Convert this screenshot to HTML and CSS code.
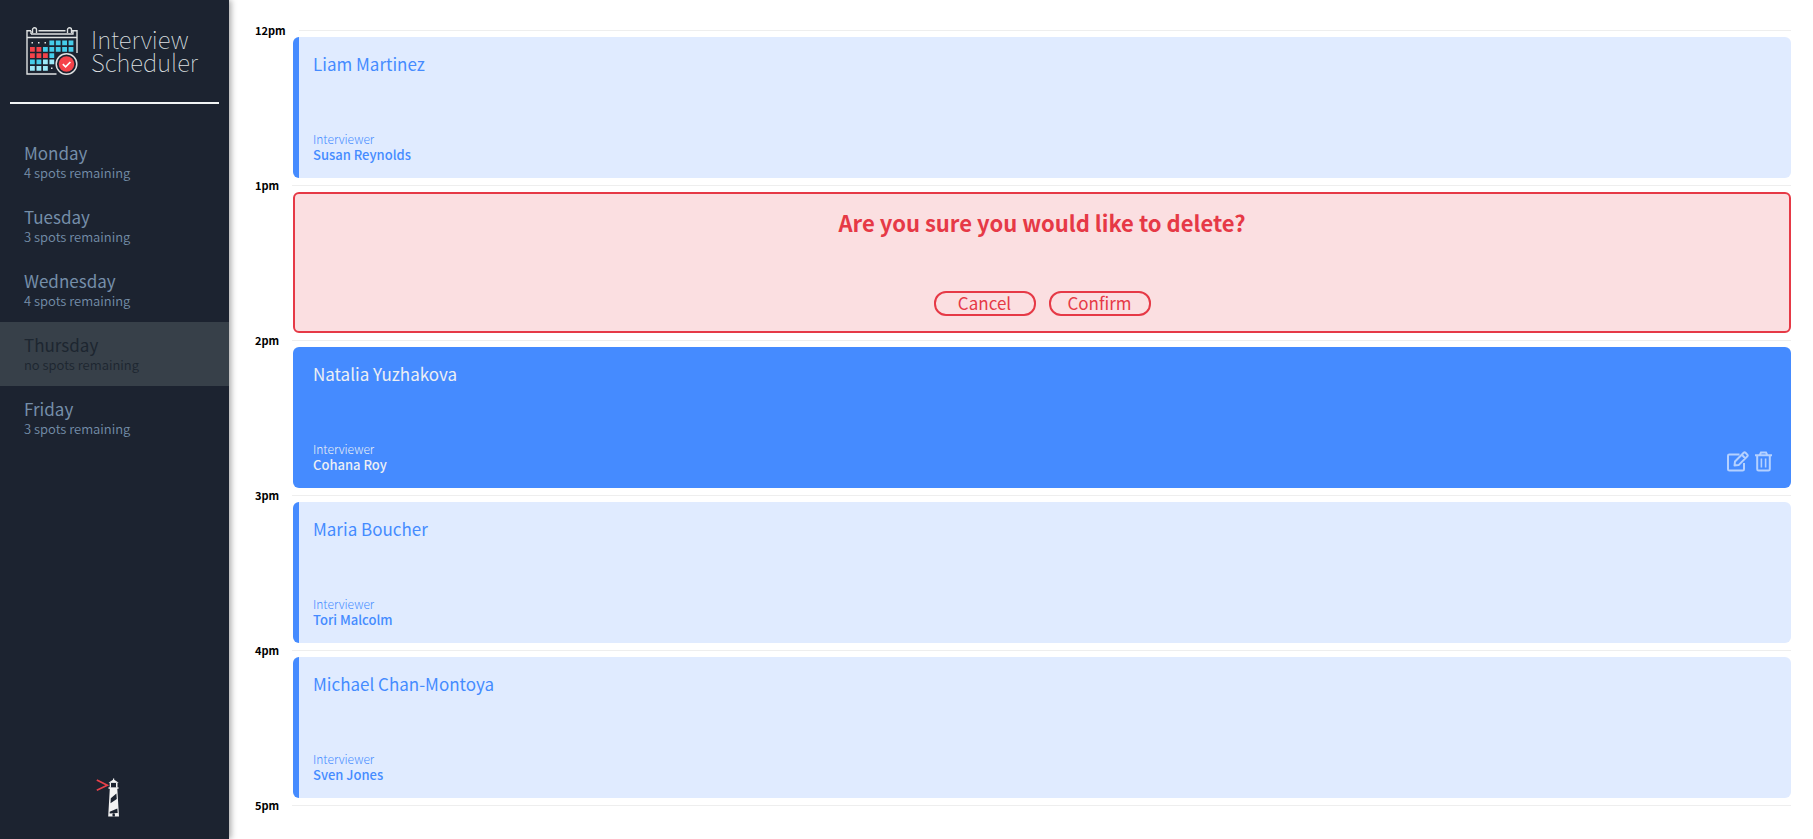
FILE: index.html
```html
<!DOCTYPE html>
<html lang="en">
<head>
<meta charset="utf-8">
<title>Interview Scheduler</title>
<link rel="stylesheet" href="styles.css">
</head>
<body>
<div class="layout">
  <aside class="sidebar">
    <div class="logo">
      <svg class="logo-icon" viewBox="0 0 52 49" aria-hidden="true">
        <g fill="none" stroke="#dfe2e2" stroke-width="1.4">
          <path d="M51 26V3.800H46M5 3.800H1V47H30.500M12.500 3.800H39.500M1 10.500H51M5 7H47V4M5 7V4"/>
          <path d="M6.500 6V2.800a2 2 0 0 1 4 0V6M41.500 6V2.800a2 2 0 0 1 4 0V6"/>
        </g>
        <g fill="#e3e6e6"><path d="M5.500 15h1.500v1.500H5.500zM12 15h1.500v1.500H12zM18.500 15H20v1.500h-1.500zM25 40.500h1.500V42H25z"/></g>
        <g fill="#45cdea"><path d="M23.400 13.500h4.800v4.700h-4.800zM29.800 13.500h4.800v4.700h-4.800zM36.200 13.500H41v4.700h-4.800zM42.600 13.500h4.800v4.700h-4.800zM17 20h4.800v4.700H17zM23.400 20h4.800v4.700h-4.800zM29.800 20h4.800v4.700h-4.800zM36.200 20H41v4.700h-4.800zM42.600 20h4.800v4.700h-4.800zM23.400 26.300h4.800V31h-4.800zM4 32.500h4.800v4.700H4zM10.500 32.500h4.800v4.700h-4.800z"/></g>
        <g fill="#9ce9f8"><path d="M17 32.500h4.800v4.700H17zM23.400 32.500h4.800v4.700h-4.800zM4 39h4.800v4.700H4zM10.500 39h4.800v4.700h-4.800zM17 39h4.800v4.700H17z"/></g>
        <g fill="#f5434a"><path d="M4 20h4.800v4.700H4zM10.500 20h4.800v4.700h-4.800zM4 26.300h4.800V31H4zM10.500 26.300h4.800V31h-4.800zM17 26.300h4.800V31H17z"/></g>
        <circle cx="40.500" cy="37" r="10.300" fill="#1c2330" stroke="#dfe2e2" stroke-width="1.500"/>
        <circle cx="40.500" cy="37" r="7.800" fill="#f5434a"/>
        <path d="M36.800 37.200l2.800 2.600 4.800-4.800" fill="none" stroke="#fff" stroke-width="1.700"/>
      </svg>
      <span class="logo-text">Interview<br>Scheduler</span>
    </div>
    <hr class="rule">
    <nav>
      <ul class="days">
        <li><button class="day" type="button"><span class="day-name">Monday</span><span class="spots">4 spots remaining</span></button></li>
        <li><button class="day" type="button"><span class="day-name">Tuesday</span><span class="spots">3 spots remaining</span></button></li>
        <li><button class="day" type="button"><span class="day-name">Wednesday</span><span class="spots">4 spots remaining</span></button></li>
        <li><button class="day full" type="button"><span class="day-name">Thursday</span><span class="spots">no spots remaining</span></button></li>
        <li><button class="day" type="button"><span class="day-name">Friday</span><span class="spots">3 spots remaining</span></button></li>
      </ul>
    </nav>
    <svg class="lighthouse" viewBox="0 0 24 40" aria-hidden="true">
      <path d="M.8 2l10.500 5.300L.8 12.200" fill="none" stroke="#e8414a" stroke-width="1.700"/>
      <path d="M12.500 9.200h10v1.600h-1.200L23 38.500H12.200L13.800 10.800h-1.300zM12.500 4.800l4.500-3V.5h1.200v1.300l4.500 3z" fill="#f3f3f3"/>
      <path d="M13.700 4.500h7.800v5h-7.800z" fill="#f3f3f3"/>
      <path d="M15 5h5v4.300h-5zM20.400 15.500l.4 5.500-6.300 4.200.3-5zM21.300 30.500l.4 4.500-8 .6v-1.800z" fill="#1c2330"/>
      <path d="M16.500 38.500v-2a1.200 1.200 0 0 1 2.400 0v2z" fill="#1c2330"/>
    </svg>
  </aside>

  <main class="schedule">
    <section>
      <header class="hour"><h2 class="time">12pm</h2><hr class="line"></header>
      <article class="card booked">
        <h3 class="student">Liam Martinez</h3>
        <div class="interviewer"><h4 class="label">Interviewer</h4><p class="person">Susan Reynolds</p></div>
      </article>
    </section>
    <section>
      <header class="hour"><h2 class="time">1pm</h2><hr class="line"></header>
      <article class="card confirm">
        <h3 class="question">Are you sure you would like to delete?</h3>
        <div class="actions"><button class="button" type="button">Cancel</button><button class="button" type="button">Confirm</button></div>
      </article>
    </section>
    <section>
      <header class="hour"><h2 class="time">2pm</h2><hr class="line"></header>
      <article class="card active">
        <h3 class="student">Natalia Yuzhakova</h3>
        <div class="card-foot">
          <div class="interviewer"><h4 class="label">Interviewer</h4><p class="person">Cohana Roy</p></div>
          <div class="tools">
            <button class="tool" type="button" aria-label="Edit">
              <svg width="22" height="21" viewBox="0 0 22 21" fill="none" stroke="currentColor" stroke-width="2"><path d="M12.500 3.400H2.400Q1 3.400 1 4.800V18.200Q1 19.600 2.400 19.600H15.600Q17 19.600 17 18.200V12"/><path d="M7.500 14.500L8 10.500 16.700 1.800Q17.600.9 18.500 1.800L20.300 3.600Q21.200 4.500 20.300 5.400L11.600 14.100zM14.800 3.800L18.200 7.200" stroke-linejoin="round"/></svg>
            </button>
            <button class="tool" type="button" aria-label="Delete">
              <svg width="17" height="21" viewBox="0 0 17 21" fill="none" stroke="currentColor" stroke-width="2"><path d="M0 4.200H17M2.200 4.200V18.200Q2.200 19.600 3.600 19.600H13.400Q14.800 19.600 14.800 18.200V4.200M4.800 4L6 1.400H11L12.200 4"/><path d="M6.400 7.500V16.500M10.600 7.500V16.500" stroke-width="1.600"/></svg>
            </button>
          </div>
        </div>
      </article>
    </section>
    <section>
      <header class="hour"><h2 class="time">3pm</h2><hr class="line"></header>
      <article class="card booked">
        <h3 class="student">Maria Boucher</h3>
        <div class="interviewer"><h4 class="label">Interviewer</h4><p class="person">Tori Malcolm</p></div>
      </article>
    </section>
    <section>
      <header class="hour"><h2 class="time">4pm</h2><hr class="line"></header>
      <article class="card booked">
        <h3 class="student">Michael Chan-Montoya</h3>
        <div class="interviewer"><h4 class="label">Interviewer</h4><p class="person">Sven Jones</p></div>
      </article>
    </section>
    <section>
      <header class="hour"><h2 class="time">5pm</h2><hr class="line"></header>
    </section>
  </main>
</div>
</body>
</html>
```
FILE: styles.css
```css
* { box-sizing: border-box; margin: 0; padding: 0; }
body { background: #fff; color: #000; font-family: "Noto Sans CJK JP", "Noto Sans", sans-serif; font-size: 17px; }
button { border: 0; background: none; color: inherit; font: inherit; cursor: pointer; }
hr { border: 0; }
.layout { display: flex; min-height: 100vh; }

.sidebar { display: flex; flex-direction: column; flex: none; width: 229px; padding: 27px 0 21px; background: #1c2330; color: #758ea9; box-shadow: 2px 0 6px rgba(0, 0, 0, 0.35); }
.logo { display: flex; align-items: flex-start; gap: 13px; height: 50px; margin-left: 26px; }
.logo-icon { width: 52px; height: 49px; }
.logo-text { color: #dee0e2; font-size: 24px; font-weight: 100; line-height: 23px; }
.rule { height: 2px; margin: 25px 10px 26px; background: #f1f4f4; }
.days { list-style: none; }
.day { display: flex; flex-direction: column; justify-content: center; width: 100%; height: 64px; padding-left: 24px; text-align: left; }
.day-name { font-size: 17px; line-height: 22px; }
.spots { font-size: 13px; font-weight: 350; line-height: 18px; }
.full { background: #374049; color: #1d2630; }
.lighthouse { width: 24px; height: 40px; margin: auto auto 0 96px; }

.schedule { flex: 1; padding: 24px 22px 24px 26px; }
.hour { display: flex; align-items: center; gap: 13px; height: 13px; }
.time { font-size: 11px; font-weight: 700; line-height: 13px; }
.line { flex: 1; height: 1px; background: #eee; }
.card { display: flex; flex-direction: column; justify-content: space-between; height: 141px; margin: 0 0 1px 38px; padding: 15px 19px 16px 20px; border-radius: 6px; }
.booked { padding-left: 14px; border-left: 6px solid #458bff; background: #e0ebff; color: #458bff; }
.active { background: #458bff; color: #eceff4; }
.student { font-size: 17px; font-weight: 400; line-height: 24px; }
.label { font-size: 12px; font-weight: 300; line-height: 16px; }
.person { font-size: 13px; font-weight: 500; line-height: 15px; }
.card-foot { display: flex; align-items: flex-end; justify-content: space-between; }
.tools { display: flex; gap: 6px; color: #b5d1ff; }
.tool { display: flex; }
.confirm { align-items: center; padding: 13px 18px 15px; border: 2px solid #e63946; background: #fbdfe1; color: #e63946; }
.question { font-size: 22px; font-weight: 700; line-height: 30px; }
.actions { display: flex; gap: 13px; }
.button { width: 102px; height: 25px; padding-bottom: 2px; border: 2px solid #e63946; border-radius: 12px; font-size: 17px; line-height: 19px; }
```
